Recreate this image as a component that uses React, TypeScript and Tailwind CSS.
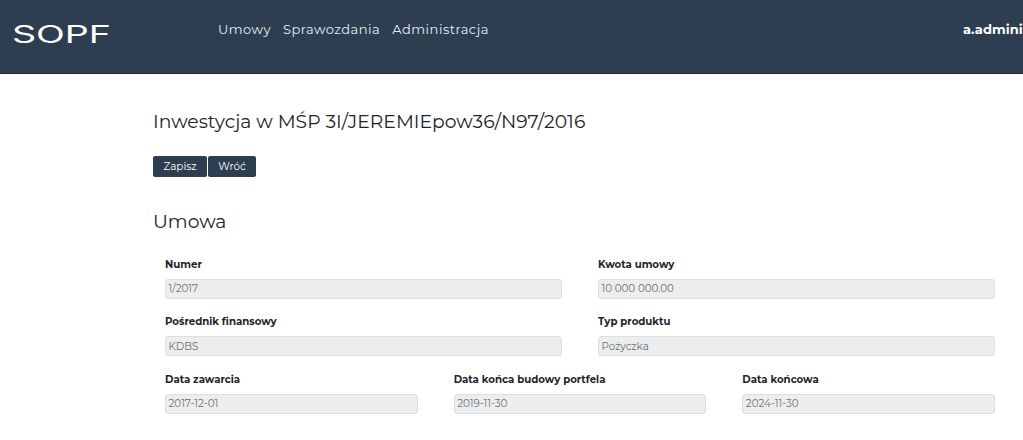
const fontMain = "font-['Montserrat','Inter','Liberation_Sans',sans-serif]";

function Field({ label, value, className }: { label: string; value: string; className: string }) {
  return (
    <div className={className}>
      <label className="block text-[10.2px] leading-[14px] font-bold text-[#212529]">{label}</label>
      <div className="mt-[7px] flex h-[20px] items-center rounded-[3px] border border-[#dcdfe2] bg-[#ecedee] px-[2.5px] text-[10.3px] text-[#6d7276]">
        {value}
      </div>
    </div>
  );
}

export default function App() {
  return (
    <div className={`h-[440px] w-[1023px] overflow-hidden bg-white ${fontMain}`}>
      <header className="flex h-[74px] border-b border-b-[#1f2a38] bg-[#2c3e50] text-white">
        <div className="mt-[20px] ml-[12px] w-[206px]">
          <svg width="104" height="28" viewBox="0 0 104 28">
            <text
              x="0"
              y="22.5"
              textLength="99"
              lengthAdjust="spacingAndGlyphs"
              fontFamily="Inter, sans-serif"
              fontSize="24"
              fontWeight="400"
              fill="#ffffff"
            >
              SOPF
            </text>
          </svg>
        </div>
        <nav className="mt-[20px] flex h-[18px] gap-[12px] text-[13px] leading-[18px] tracking-[0.5px] text-[#e8ecf0]">
          <span>Umowy</span>
          <span>Sprawozdania</span>
          <span>Administracja</span>
        </nav>
        <div className="mt-[20px] ml-auto w-[60px] overflow-hidden text-[13px] leading-[18px] font-bold tracking-[0.1px] whitespace-nowrap">
          a.administrator
        </div>
      </header>

      <main className="pl-[153px]">
        <h1 className="mt-[34px] text-[18.75px] leading-[28px] text-[#212529]">Inwestycja w MŚP 3I/JEREMIEpow36/N97/2016</h1>
        <div className="mt-[20px] flex gap-[1px]">
          <button className="h-[21px] w-[54px] rounded-[2px] bg-[#2c3e50] text-[10.4px] text-white">Zapisz</button>
          <button className="h-[21px] w-[48px] rounded-[2px] bg-[#2c3e50] text-[10.4px] text-white">Wróć</button>
        </div>
        <h2 className="mt-[31px] text-[18.75px] leading-[28px] text-[#212529]">Umowa</h2>

        <div className="mt-[22px] ml-[12px] grid w-[830px] grid-cols-6 gap-x-[36px] gap-y-[16.3px]">
          <Field className="col-span-3" label="Numer" value="1/2017" />
          <Field className="col-span-3" label="Kwota umowy" value="10 000 000.00" />
          <Field className="col-span-3" label="Pośrednik finansowy" value="KDBS" />
          <Field className="col-span-3" label="Typ produktu" value="Pożyczka" />
          <Field className="col-span-2" label="Data zawarcia" value="2017-12-01" />
          <Field className="col-span-2" label="Data końca budowy portfela" value="2019-11-30" />
          <Field className="col-span-2" label="Data końcowa" value="2024-11-30" />
        </div>
      </main>
    </div>
  );
}
